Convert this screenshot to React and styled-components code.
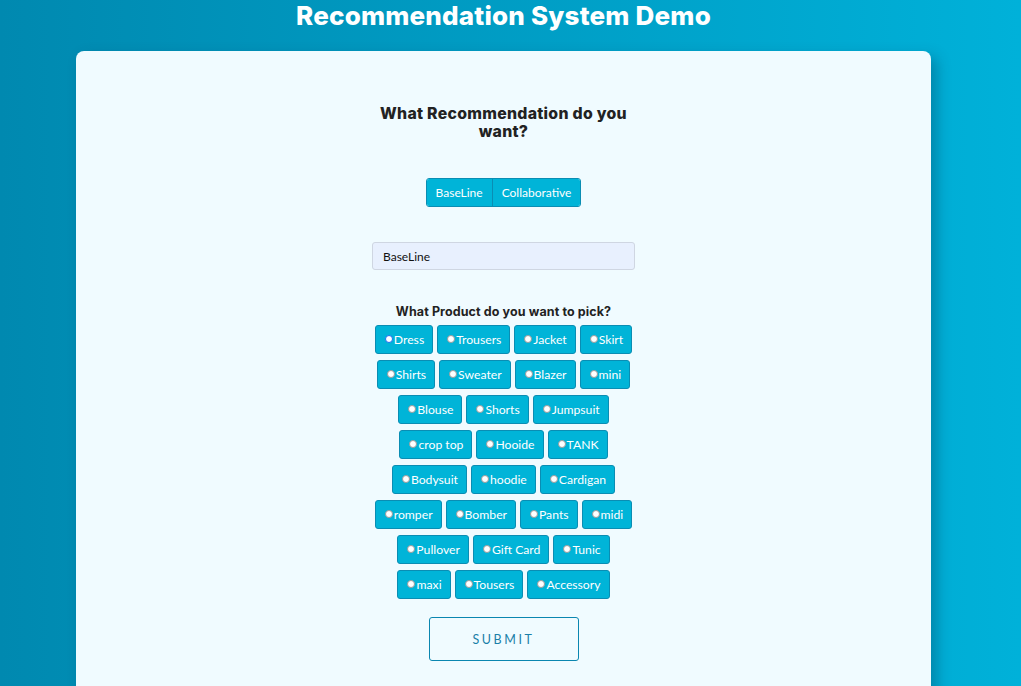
import React, { useState } from "react";
import styled, { createGlobalStyle } from "styled-components";

const GlobalStyle = createGlobalStyle`
  html, body {
    margin: 0;
    padding: 0;
  }
  body {
    background: linear-gradient(90deg, #0089b0 0%, #00b1d9 100%);
    min-height: 686px;
    font-family: Lato, "Open Sans", Arial, sans-serif;
    overflow: hidden;
  }
`;

// rows as the form lays them out
const productRows = [
  ["Dress", "Trousers", "Jacket", "Skirt"],
  ["Shirts", "Sweater", "Blazer", "mini"],
  ["Blouse", "Shorts", "Jumpsuit"],
  ["crop top", "Hooide", "TANK"],
  ["Bodysuit", "hoodie", "Cardigan"],
  ["romper", "Bomber", "Pants", "midi"],
  ["Pullover", "Gift Card", "Tunic"],
  ["maxi", "Tousers", "Accessory"],
];

const App = () => {
  const [mode, setMode] = useState("BaseLine");
  const [product, setProduct] = useState("");

  return (
    <>
      <GlobalStyle />
      <Page>
        <Title>Recommendation System Demo</Title>
        <Card>
          <Question>What Recommendation do you want?</Question>
          <Toggle>
            <ToggleButton onClick={() => setMode("BaseLine")}>BaseLine</ToggleButton>
            <ToggleButton onClick={() => setMode("Collaborative")}>
              Collaborative
            </ToggleButton>
          </Toggle>
          <ModeInput value={mode} readOnly />
          <SubQuestion>What Product do you want to pick?</SubQuestion>
          <Products>
            {productRows.map((row, r) => (
              <ProductRow key={r}>
                {row.map((p) => (
                  <ProductButton key={p}>
                    <Radio
                      type="radio"
                      name="product"
                      value={p}
                      $focused={p === "Dress"}
                      checked={product === p}
                      onChange={() => setProduct(p)}
                    />
                    {p}
                  </ProductButton>
                ))}
              </ProductRow>
            ))}
          </Products>
          <Submit>Submit</Submit>
        </Card>
      </Page>
    </>
  );
};

export default App;

const Page = styled.div`
  padding-right: 14px;
`;

const Title = styled.h1`
  margin: 0;
  height: 32px;
  line-height: 32px;
  text-align: center;
  color: #fff;
  font-family: Inter, "DejaVu Sans", sans-serif;
  font-weight: 800;
  font-size: 26px;
  letter-spacing: 0.2px;
`;

const Card = styled.div`
  margin: 19px 76px 0;
  min-height: 700px;
  background: #f0fbff;
  border-radius: 8px;
  box-shadow: 6px 6px 14px rgba(0, 60, 90, 0.35);
  display: flex;
  flex-direction: column;
  align-items: center;
  padding-top: 54px;
  box-sizing: border-box;
`;

const Question = styled.h2`
  margin: 0;
  width: 270px;
  text-align: center;
  color: #222;
  font-family: Inter, "DejaVu Sans", sans-serif;
  font-weight: 800;
  font-size: 15.8px;
  letter-spacing: 0.3px;
  line-height: 18px;
`;

const Toggle = styled.div`
  display: flex;
  margin-top: 37px;
  border: 1px solid #0a8db3;
  border-radius: 3px;
  overflow: hidden;
`;

const ToggleButton = styled.button`
  height: 27px;
  padding: 0 9px;
  border: none;
  background: #00b4d8;
  color: #fff;
  font-family: Lato, "Open Sans", sans-serif;
  font-size: 12px;
  cursor: pointer;

  & + & {
    border-left: 1px solid #0a8db3;
  }
`;

const ModeInput = styled.input`
  margin-top: 35px;
  width: 263px;
  height: 28px;
  box-sizing: border-box;
  padding: 0 10px;
  background: #e8f0fe;
  border: 1px solid #cfd6e2;
  border-radius: 3px;
  font-family: Lato, "Open Sans", sans-serif;
  font-size: 12px;
  color: #111;
  outline: none;
`;

const SubQuestion = styled.h3`
  margin: 34px 0 5px;
  color: #222;
  font-family: Inter, "DejaVu Sans", sans-serif;
  font-weight: 700;
  font-size: 12.5px;
  letter-spacing: 0.1px;
  line-height: 16px;
`;

const Products = styled.div`
  display: flex;
  flex-direction: column;
  align-items: center;
  gap: 6px;
`;

const ProductRow = styled.div`
  display: flex;
  justify-content: center;
  gap: 4px;
`;

const ProductButton = styled.label`
  display: inline-flex;
  align-items: center;
  height: 29px;
  box-sizing: border-box;
  padding: 0 8px 0 9px;
  background: #00b4d8;
  border: 1px solid #0a8db3;
  border-radius: 3px;
  color: #fff;
  font-family: Lato, "Open Sans", sans-serif;
  font-size: 12.2px;
  cursor: pointer;
`;

const Radio = styled.input`
  appearance: none;
  width: 8px;
  height: 8px;
  margin: 0 1px 1px 0;
  border-radius: 50%;
  background: #fff;
  border: 1px solid ${(p) => (p.$focused ? "#1a6cf0" : "#9a9a9a")};
  box-sizing: border-box;
  flex-shrink: 0;
`;

const Submit = styled.button`
  margin-top: 18px;
  width: 150px;
  height: 44px;
  background: transparent;
  border: 1px solid #0a86b0;
  border-radius: 3px;
  color: #1a7fa8;
  font-family: Lato, "Open Sans", sans-serif;
  font-size: 12.5px;
  letter-spacing: 2.6px;
  text-transform: uppercase;
  cursor: pointer;
`;
